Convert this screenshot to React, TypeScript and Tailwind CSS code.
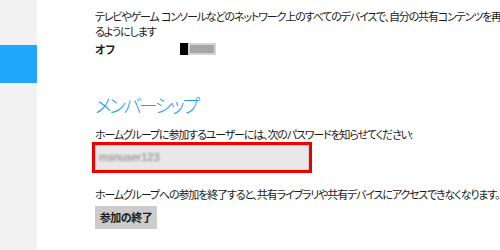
import React from 'react';

const jp = "font-['Meiryo_UI','Noto_Sans_CJK_JP',sans-serif] [font-feature-settings:'palt']";

export default function App() {
  return (
    <div className={`flex w-[500px] h-[250px] overflow-hidden bg-white text-[#1a1a1a] ${jp}`}>
      {/* sidebar */}
      <div className="w-[37px] shrink-0 bg-[#f2f2f2]">
        <div className="mt-[45px] h-[38px] bg-[#1fa8fb]" />
      </div>

      <div className="flex-1 min-w-0 pl-[58px] pt-[9px] text-[11px] leading-[15px] tracking-[-1.15px] whitespace-nowrap">
        <p>テレビやゲーム{'\u00a0 '}コンソールなどのネットワーク上のすべてのデバイスで、自分の共有コンテンツを再生でき</p>
        <p>るようにします</p>

        {/* toggle row */}
        <div className="mt-[3px] flex items-center h-[14px]">
          <span className="w-[85px] font-bold tracking-normal">オフ</span>
          <div className="flex h-[12px] w-[36px]">
            <div className="w-[8px] bg-black" />
            <div className="flex-1 border-2 border-[#d4d4d4] bg-[#a6a6a6]" />
          </div>
        </div>

        <h2 className="mt-[37px] text-[19px] leading-[24px] font-light tracking-[-2.5px] text-[#1fa0ee]">メンバーシップ</h2>

        <p className="mt-[10px]">ホームグループに参加するユーザーには、次のパスワードを知らせてください:</p>

        {/* password box */}
        <div className="-ml-[3px] w-[220px] h-[31px] border-[3px] border-[#ee0000]">
          <div className="h-full border border-[#d2d2d2] bg-[#e8e8e8] flex items-center pl-[3px]">
            <span className="text-[11px] tracking-normal text-[#7d7d7d] blur-[0.9px] font-['Liberation_Sans',sans-serif]">msnuser123</span>
          </div>
        </div>

        <p className="mt-[14px]">ホームグループへの参加を終了すると、共有ライブラリや共有デバイスにアクセスできなくなります。</p>

        <button className="mt-[4px] h-[23px] w-[62px] bg-[#cccccc] font-bold text-[11px] leading-[23px] tracking-[-0.5px] text-center">
          参加の終了
        </button>
      </div>
    </div>
  );
}
